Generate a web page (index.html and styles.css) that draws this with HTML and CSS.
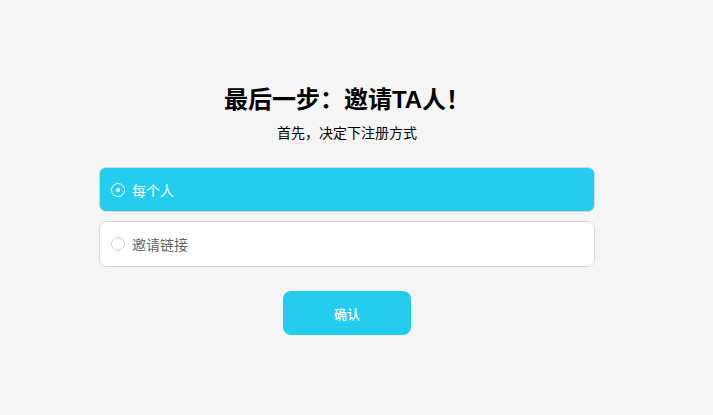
FILE: index.html
```html
<!DOCTYPE html>
<html lang="zh-CN">
<head>
<meta charset="utf-8">
<link rel="stylesheet" href="styles.css">
</head>
<body>
<main class="page">
  <h1 class="title">最后一步：邀请TA人！</h1>
  <p class="subtitle">首先，决定下注册方式</p>
  <div class="options">
    <label class="option option-active">
      <span class="radio radio-checked"></span>
      <span class="option-text">每个人</span>
    </label>
    <label class="option">
      <span class="radio"></span>
      <span class="option-text">邀请链接</span>
    </label>
  </div>
  <button class="confirm">确认</button>
</main>
</body>
</html>
```

FILE: styles.css
```css
html, body {
  margin: 0;
  padding: 0;
  background: #f5f5f5;
  font-family: "Liberation Sans", "Noto Sans CJK SC", sans-serif;
  color: #000;
}
.page {
  width: 694px;
  display: flex;
  flex-direction: column;
  align-items: center;
  padding-top: 82px;
}
.title {
  margin: 0;
  font-size: 24px;
  line-height: 36px;
  font-weight: 700;
}
.subtitle {
  margin: 5px 0 0;
  font-size: 14px;
  line-height: 20px;
}
.options {
  width: 496px;
  margin-top: 24px;
  display: flex;
  flex-direction: column;
  gap: 9px;
}
.option {
  box-sizing: border-box;
  height: 46px;
  display: flex;
  align-items: center;
  gap: 7px;
  padding-left: 11px;
  background: #fff;
  border: 1px solid #d6d6d6;
  border-radius: 7px;
  font-size: 14px;
  color: #666;
}
.option-active {
  height: 45px;
  background: #22cdee;
  border-color: #d8d8d8;
  color: #fff;
}
.radio {
  box-sizing: border-box;
  width: 14px;
  height: 14px;
  border-radius: 50%;
  border: 1px solid #d3d3d3;
  background: #fff;
  position: relative;
}
.radio-checked {
  background: transparent;
  border: 1.5px solid #fff;
}
.radio-checked::after {
  content: "";
  position: absolute;
  left: 50%;
  top: 50%;
  width: 4px;
  height: 4px;
  margin: -2px 0 0 -2px;
  border-radius: 50%;
  background: #fff;
}
.confirm {
  margin-top: 24px;
  width: 128px;
  height: 44px;
  border: none;
  border-radius: 8px;
  background: #22cdee;
  color: #fff;
  font-family: inherit;
  font-size: 13px;
  font-weight: 500;
}
```
